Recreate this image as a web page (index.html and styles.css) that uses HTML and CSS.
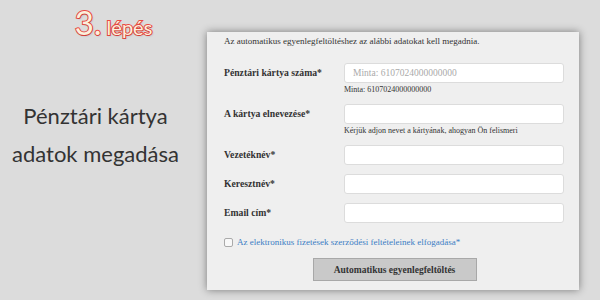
FILE: index.html
```html
<!DOCTYPE html>
<html lang="hu">
<head>
    <meta charset="UTF-8">
    <meta name="viewport" content="width=device-width, initial-scale=1.0">
    <title>Pénztári kártya adatok megadása</title>
    <link rel="stylesheet" href="styles.css">
</head>
<body>
    <div class="page">
        <div class="side">
            <div class="step"><span class="step-num">3.</span><span class="step-word">lépés</span></div>
            <p class="side-title">Pénztári kártya<br>adatok megadása</p>
        </div>

        <div class="panel">
            <p class="intro">Az automatikus egyenlegfeltöltéshez az alábbi adatokat kell megadnia.</p>

            <div class="form">
                <label class="label">Pénztári kártya száma*</label>
                <div class="field">
                    <input class="input" type="text" placeholder="Minta: 6107024000000000">
                    <div class="hint">Minta: 6107024000000000</div>
                </div>

                <label class="label">A kártya elnevezése*</label>
                <div class="field">
                    <input class="input" type="text">
                    <div class="hint">Kérjük adjon nevet a kártyának, ahogyan Ön felismeri</div>
                </div>

                <label class="label">Vezetéknév*</label>
                <div class="field"><input class="input" type="text"></div>

                <label class="label">Keresztnév*</label>
                <div class="field"><input class="input" type="text"></div>

                <label class="label">Email cím*</label>
                <div class="field"><input class="input" type="text"></div>
            </div>

            <div class="terms">
                <span class="checkbox"></span>
                <a href="#" class="terms-link">Az elektronikus fizetések szerződési feltételeinek elfogadása*</a>
            </div>

            <div class="actions">
                <button class="btn">Automatikus egyenlegfeltöltés</button>
            </div>
        </div>
    </div>
</body>
</html>
```

FILE: styles.css
```css
* {
    box-sizing: border-box;
    margin: 0;
    padding: 0;
}

body {
    background-color: #dcdcdc;
    width: 600px;
    height: 300px;
    overflow: hidden;
    font-family: 'Liberation Serif', 'Times New Roman', serif;
    color: #333;
}

.page {
    display: flex;
    height: 300px;
}

/* Left column */
.side {
    width: 207px;
    display: flex;
    flex-direction: column;
    align-items: center;
}

.step {
    margin-top: 2px;
    margin-left: 20px;
    white-space: nowrap;
    font-family: Lato, 'Open Sans', sans-serif;
    color: #fcf0dc;
    -webkit-text-stroke: 2px #ee4a44;
    paint-order: stroke fill;
    text-shadow: 1px 1px 2px rgba(0,0,0,0.2);
}

.step-num {
    font-size: 33px;
}

.step-word {
    font-size: 20px;
    margin-left: 5px;
}

.side-title {
    margin-top: 55px;
    margin-left: -16px;
    text-align: center;
    font-size: 22px;
    line-height: 38px;
    color: #333;
    font-family: Lato, 'Open Sans', sans-serif;
}

/* Form panel */
.panel {
    width: 372px;
    height: 258px;
    margin-top: 32px;
    background-color: #efefef;
    box-shadow: 0 0 8px rgba(0,0,0,0.45);
    padding: 3px 14px 0 17px;
}

.intro {
    font-size: 9px;
    line-height: 12px;
    color: #333;
    margin-bottom: 16px;
}

.form {
    display: grid;
    grid-template-columns: 120px 220px;
    row-gap: 9px;
}

.label {
    font-size: 9.7px;
    font-weight: bold;
    line-height: 20px;
    color: #333;
}

.input {
    display: block;
    width: 220px;
    height: 20px;
    border: 1px solid #dcdcdc;
    border-radius: 3px;
    background-color: #fff;
    padding: 0 8px;
    font-family: 'Liberation Serif', serif;
    font-size: 9.5px;
}

.input::placeholder {
    color: #aaa;
}

.hint {
    font-size: 8px;
    line-height: 10px;
    margin-top: 2px;
    color: #333;
}

.terms {
    display: flex;
    align-items: center;
    margin-top: 14px;
}

.checkbox {
    width: 9px;
    height: 9px;
    border: 1px solid #aaa;
    border-radius: 2px;
    background-color: #f8f8f8;
    margin-right: 4px;
}

.terms-link {
    font-size: 9px;
    color: #3b7dc4;
    text-decoration: none;
}

.actions {
    display: flex;
    justify-content: center;
    margin-top: 11px;
}

.btn {
    width: 164px;
    height: 23px;
    background-color: #c9c9c9;
    border: 1px solid #a8a8a8;
    font-family: 'Liberation Serif', serif;
    font-weight: bold;
    font-size: 9.5px;
    color: #333;
}
```
